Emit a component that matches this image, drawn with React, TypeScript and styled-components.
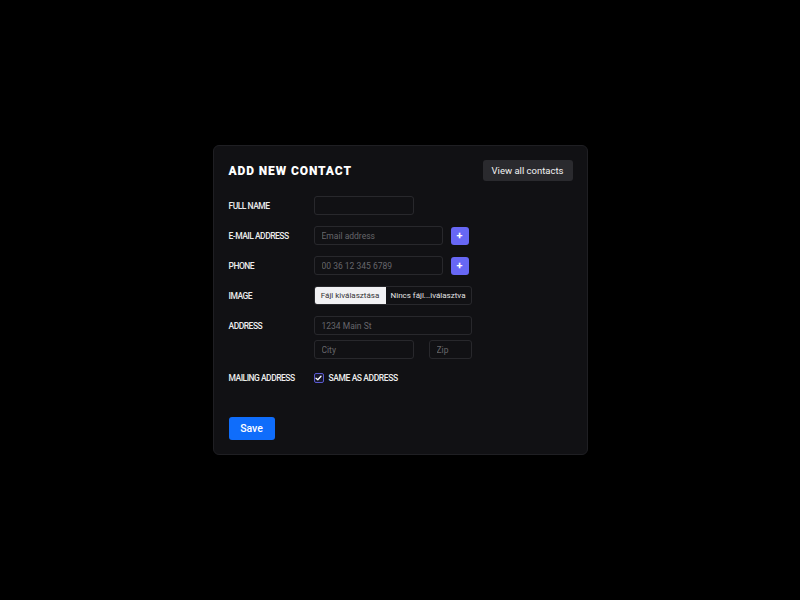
import React from "react";
import styled, { createGlobalStyle } from "styled-components";

const Global = createGlobalStyle`
  html, body { margin: 0; padding: 0; background: #000; }
  body { font-family: Roboto, "Liberation Sans", sans-serif; }
  * { box-sizing: border-box; }
`;

const Page = styled.div`
  min-height: 100vh;
  display: flex;
  align-items: center;
  justify-content: center;
`;

const Card = styled.div`
  width: 375px;
  height: 310px;
  background: #111114;
  border: 1px solid #1f1f23;
  border-radius: 6px;
  padding: 14px 14px 14px 15px;
  display: flex;
  flex-direction: column;
`;

const Header = styled.div`
  display: flex;
  align-items: center;
  justify-content: space-between;
  margin-bottom: 15px;
`;

const Title = styled.h1`
  margin: 0;
  font-size: 12px;
  font-weight: 900;
  letter-spacing: 0.9px;
  color: #fff;
`;

const GhostButton = styled.button`
  height: 21px;
  width: 90px;
  border: none;
  border-radius: 3px;
  background: #2a2a2e;
  color: #f2f2f2;
  font-family: inherit;
  font-size: 9.5px;
  padding: 0;
`;

const Form = styled.div`
  display: grid;
  grid-template-columns: 85px 1fr;
  row-gap: 11px;
  align-items: center;
`;

const Label = styled.div<{ $top?: boolean }>`
  font-size: 8.5px;
  font-weight: 500;
  color: #ececec;
  text-transform: uppercase;
  letter-spacing: -0.5px;
  ${(p) => (p.$top ? "align-self: start; margin-top: 5px;" : "")}
`;

const Field = styled.div<{ $gap?: number }>`
  display: flex;
  align-items: center;
  gap: ${(p) => p.$gap ?? 8}px;
`;

const Stack = styled.div`
  display: flex;
  flex-direction: column;
  gap: 5px;
`;

const Input = styled.input<{ $w: number }>`
  width: ${(p) => p.$w}px;
  height: 19px;
  background: transparent;
  border: 1px solid #28282c;
  border-radius: 3px;
  padding: 0 7px;
  color: #ddd;
  font-family: inherit;
  font-size: 8.5px;
  outline: none;
  &::placeholder { color: #66666b; }
`;

const PlusButton = styled.button`
  width: 18px;
  height: 18px;
  border: none;
  border-radius: 3px;
  background: #6767f5;
  color: #fff;
  font-family: inherit;
  font-size: 11px;
  font-weight: 700;
  line-height: 18px;
  padding: 0;
`;

const FileBox = styled.div`
  width: 158px;
  height: 19px;
  display: flex;
  border: 1px solid #28282c;
  border-radius: 3px;
  overflow: hidden;
`;

const FileButton = styled.div`
  width: 71px;
  background: #f1f1f3;
  color: #333;
  font-size: 8px;
  display: flex;
  align-items: center;
  justify-content: center;
  white-space: nowrap;
`;

const FileName = styled.div`
  flex: 1;
  color: #e5e5e5;
  font-size: 8px;
  display: flex;
  align-items: center;
  justify-content: center;
  white-space: nowrap;
`;

const CheckRow = styled.label`
  display: flex;
  align-items: center;
  gap: 5px;
  margin-top: 3px;
  font-size: 8.5px;
  font-weight: 500;
  color: #ececec;
  letter-spacing: -0.4px;
`;

const Box = styled.span`
  width: 10px;
  height: 10px;
  border: 1px solid #5a5ad0;
  border-radius: 2px;
  background: #18182a;
  display: flex;
  align-items: center;
  justify-content: center;
`;

const MailLabel = styled(Label)`
  margin-top: 3px;
`;

const Footer = styled.div`
  margin-top: 34px;
`;

const SaveButton = styled.button`
  width: 46px;
  height: 23px;
  border: none;
  border-radius: 3px;
  background: #0f6dfb;
  color: #fff;
  font-family: inherit;
  font-size: 10.5px;
  font-weight: 500;
  padding: 0;
`;

export default function App() {
  return (
    <>
      <Global />
      <Page>
        <Card>
          <Header>
            <Title>ADD NEW CONTACT</Title>
            <GhostButton>View all contacts</GhostButton>
          </Header>
          <Form>
            <Label>Full name</Label>
            <Field>
              <Input $w={100} />
            </Field>

            <Label>E-mail address</Label>
            <Field>
              <Input $w={129} placeholder="Email address" />
              <PlusButton>+</PlusButton>
            </Field>

            <Label>Phone</Label>
            <Field>
              <Input $w={129} placeholder="00 36 12 345 6789" />
              <PlusButton>+</PlusButton>
            </Field>

            <Label>Image</Label>
            <Field>
              <FileBox>
                <FileButton>Fájl kiválasztása</FileButton>
                <FileName>Nincs fájl...iválasztva</FileName>
              </FileBox>
            </Field>

            <Label $top>Address</Label>
            <Stack>
              <Input $w={158} placeholder="1234 Main St" />
              <Field $gap={15}>
                <Input $w={100} placeholder="City" />
                <Input $w={43} placeholder="Zip" />
              </Field>
            </Stack>

            <MailLabel>Mailing address</MailLabel>
            <CheckRow>
              <Box>
                <svg width="7" height="6" viewBox="0 0 7 6">
                  <path d="M1 3.2 L2.8 4.8 L6 1.2" stroke="#fff" strokeWidth="1.3" fill="none" strokeLinecap="round" strokeLinejoin="round" />
                </svg>
              </Box>
              SAME AS ADDRESS
            </CheckRow>
          </Form>
          <Footer>
            <SaveButton>Save</SaveButton>
          </Footer>
        </Card>
      </Page>
    </>
  );
}
